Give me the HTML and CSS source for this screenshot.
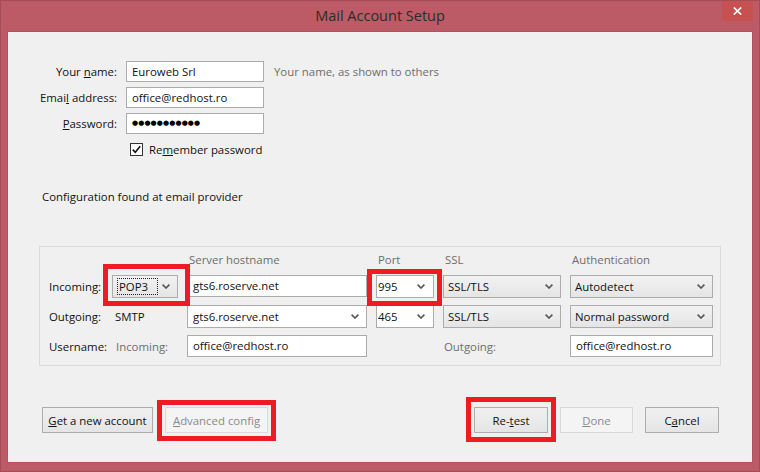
FILE: index.html
```html
<!DOCTYPE html>
<html lang="en">
<head>
<meta charset="utf-8">
<title>Mail Account Setup</title>
<link rel="stylesheet" href="styles.css">
</head>
<body>
<div class="window">
  <header class="titlebar">
    <span class="spacer"></span>
    <h1 class="title">Mail Account Setup</h1>
    <button class="close" aria-label="Close">
      <svg width="9" height="8" viewBox="0 0 9 8"><path d="M0.8 0.5 L8.2 7.5 M8.2 0.5 L0.8 7.5" stroke="#fff" stroke-width="1.7" fill="none"/></svg>
    </button>
  </header>

  <main class="client">
    <div class="identity">
      <span class="lbl">Your <u>n</u>ame:</span>
      <div class="field">Euroweb Srl</div>
      <span class="hint">Your name, as shown to others</span>

      <span class="lbl">Emai<u>l</u> address:</span>
      <div class="field">office@redhost.ro</div>
      <span></span>

      <span class="lbl"><u>P</u>assword:</span>
      <div class="field pw">●●●●●●●●●●●</div>
      <span></span>

      <div class="remember">
        <span class="checkbox">
          <svg width="11" height="11" viewBox="0 0 11 11"><path d="M1.8 5.6 L4.3 8.2 L9.2 2.2" stroke="#111" stroke-width="1.6" fill="none"/></svg>
        </span>
        <span>Re<u>m</u>ember password</span>
      </div>
    </div>

    <p class="status">Configuration found at email provider</p>

    <section class="server">
      <span></span>
      <span></span>
      <span class="colhead">Server hostname</span>
      <span class="colhead">Port</span>
      <span class="colhead">SSL</span>
      <span class="colhead">Authentication</span>

      <span class="rowlbl">Incoming:</span>
      <div class="mark mark-pop">
        <div class="select gray pop">
          <span class="focus">POP3</span>
          <svg class="chev" width="8" height="5" viewBox="0 0 8 5"><path d="M0.6 0.6 L4 4 L7.4 0.6" stroke="#555" stroke-width="1.6" fill="none"/></svg>
        </div>
      </div>
      <div class="field host">gts6.roserve.net</div>
      <div class="mark mark-port">
        <div class="select white port">
          <span>995</span>
          <svg class="chev" width="8" height="5" viewBox="0 0 8 5"><path d="M0.6 0.6 L4 4 L7.4 0.6" stroke="#555" stroke-width="1.6" fill="none"/></svg>
        </div>
      </div>
      <div class="select gray">
        <span>SSL/TLS</span>
        <svg class="chev" width="8" height="5" viewBox="0 0 8 5"><path d="M0.6 0.6 L4 4 L7.4 0.6" stroke="#555" stroke-width="1.6" fill="none"/></svg>
      </div>
      <div class="select gray">
        <span>Autodetect</span>
        <svg class="chev" width="8" height="5" viewBox="0 0 8 5"><path d="M0.6 0.6 L4 4 L7.4 0.6" stroke="#555" stroke-width="1.6" fill="none"/></svg>
      </div>

      <span class="rowlbl">Outgoing:</span>
      <span class="proto">SMTP</span>
      <div class="select white host">
        <span>gts6.roserve.net</span>
        <svg class="chev" width="8" height="5" viewBox="0 0 8 5"><path d="M0.6 0.6 L4 4 L7.4 0.6" stroke="#555" stroke-width="1.6" fill="none"/></svg>
      </div>
      <div class="select white port">
        <span>465</span>
        <svg class="chev" width="8" height="5" viewBox="0 0 8 5"><path d="M0.6 0.6 L4 4 L7.4 0.6" stroke="#555" stroke-width="1.6" fill="none"/></svg>
      </div>
      <div class="select gray">
        <span>SSL/TLS</span>
        <svg class="chev" width="8" height="5" viewBox="0 0 8 5"><path d="M0.6 0.6 L4 4 L7.4 0.6" stroke="#555" stroke-width="1.6" fill="none"/></svg>
      </div>
      <div class="select gray">
        <span>Normal password</span>
        <svg class="chev" width="8" height="5" viewBox="0 0 8 5"><path d="M0.6 0.6 L4 4 L7.4 0.6" stroke="#555" stroke-width="1.6" fill="none"/></svg>
      </div>

      <span class="rowlbl">Username:</span>
      <span class="sublbl sub-in">Incoming:</span>
      <div class="field host">office@redhost.ro</div>
      <span></span>
      <span class="sublbl sub-out">Outgoing:</span>
      <div class="field">office@redhost.ro</div>
    </section>

    <footer class="actions">
      <div class="group">
        <button class="btn btn-new"><u>G</u>et a new account</button>
        <span class="mark mark-adv"><button class="btn btn-adv" disabled><u>A</u>dvanced config</button></span>
      </div>
      <div class="group">
        <span class="mark mark-retest"><button class="btn btn-std">Re-<u>t</u>est</button></span>
        <button class="btn btn-std btn-done" disabled><u>D</u>one</button>
        <button class="btn btn-std">C<u>a</u>ncel</button>
      </div>
    </footer>
  </main>
</div>
</body>
</html>
```

FILE: styles.css
```css
* { box-sizing: border-box; }

html, body {
  margin: 0;
  padding: 0;
}

body {
  width: 760px;
  height: 472px;
  overflow: hidden;
  font-family: "Open Sans", "Noto Sans", sans-serif;
  font-size: 11.4px;
  color: #111;
}

u { text-underline-offset: 1px; }

.window {
  width: 760px;
  height: 472px;
  background: #bc5b65;
  border: 1px solid #a74b56;
  display: flex;
  flex-direction: column;
}

/* ---------- title bar ---------- */
.titlebar {
  height: 30px;
  flex: none;
  display: grid;
  grid-template-columns: 1fr auto 1fr;
  align-items: center;
}

.title {
  margin: 0;
  font-size: 14.5px;
  font-weight: normal;
  color: #2b2b2b;
  line-height: 20px;
}

.close {
  justify-self: end;
  align-self: start;
  width: 31px;
  height: 20px;
  margin-right: 6px;
  padding: 0;
  border: 0;
  background: #c75050;
  display: flex;
  align-items: center;
  justify-content: center;
}

/* ---------- client area ---------- */
.client {
  margin: 0 6px;
  height: 432px;
  flex: none;
  background: #f0f0f0;
  border: 1px solid #b3525d;
}

.identity {
  margin: 29px 0 0 32px;
  display: grid;
  grid-template-columns: 77px 138px auto;
  grid-auto-rows: 21px;
  column-gap: 9px;
  row-gap: 5px;
  align-items: center;
}

.lbl {
  text-align: right;
  white-space: nowrap;
}

.field {
  height: 21px;
  background: #fff;
  border: 1px solid #ababab;
  padding: 0 5px;
  line-height: 19px;
  white-space: nowrap;
  overflow: hidden;
}

.pw {
  font-family: "DejaVu Sans", sans-serif;
  font-size: 7px;
  letter-spacing: 0.1px;
  color: #000;
}

.hint {
  color: #6d6d6d;
  margin-left: 1px;
  white-space: nowrap;
}

.remember {
  grid-column: 2 / span 2;
  display: flex;
  align-items: center;
  gap: 6px;
  padding-left: 4px;
}

.checkbox {
  width: 13px;
  height: 13px;
  border: 1px solid #333;
  background: #fff;
  display: flex;
  align-items: center;
  justify-content: center;
}

.status {
  margin: 29px 0 0 34px;
  line-height: 16px;
}

/* ---------- server box ---------- */
.server {
  margin: 41px 0 0 31px;
  width: 682px;
  height: 120px;
  border: 1px solid #dadada;
  padding: 5px 7px 7px 8px;
  display: grid;
  grid-template-columns: 55px 66px 180px 58px 118px 143px;
  grid-template-rows: 16px 24px 24px 24px;
  column-gap: 9px;
  row-gap: 6px;
  align-items: center;
}

.colhead {
  color: #6d6d6d;
  padding-left: 2px;
  line-height: 16px;
  white-space: nowrap;
}

.rowlbl { padding-left: 1px; white-space: nowrap; }

.proto { padding-left: 3px; }

.sublbl { color: #6d6d6d; white-space: nowrap; }
.sub-in { padding-left: 4px; }
.sub-out { padding-left: 1px; }

.server .field { height: 22px; line-height: 20px; }

.select {
  height: 23px;
  border: 1px solid #acacac;
  display: flex;
  align-items: center;
  justify-content: space-between;
  padding: 0 7px 0 4px;
  white-space: nowrap;
}

.select.gray { background: linear-gradient(#f2f2f2, #e5e5e5); }
.select.white { background: #fff; padding-left: 5px; }
.select.port { padding-left: 1px; padding-right: 8px; }

.focus {
  border: 1px dotted #222;
  width: 41px;
  height: 17px;
  line-height: 15px;
  padding-left: 1px;
}

.chev { flex: none; }

/* ---------- annotation frames ---------- */
.mark {
  position: relative;
  display: block;
}

.mark::after {
  content: "";
  position: absolute;
  border: 5px solid #ed1c24;
  pointer-events: none;
}

.mark-pop::after { inset: -11px -12px -8px -9px; }
.mark-port::after { inset: -6px -8px -8px -9px; }
.mark-adv::after { inset: -7px -8px -8px -8px; }
.mark-retest::after { inset: -10px -8px -9px -8px; }

/* ---------- buttons ---------- */
.actions {
  margin-top: 41px;
  padding: 0 33px 0 34px;
  display: flex;
  justify-content: space-between;
}

.group {
  display: flex;
  gap: 12px;
}

.btn {
  height: 26px;
  padding: 0;
  font-family: inherit;
  font-size: 11.4px;
  color: #111;
  border: 1px solid #adadad;
  background: linear-gradient(#f0f0f0, #e5e5e5);
  display: block;
}

.btn:disabled {
  color: #8a8a8a;
  border-color: #d9d9d9;
  background: #f4f4f4;
}

.btn-new { width: 111px; }
.btn-adv { width: 103px; }
.btn-std { width: 74px; }
.btn-done { width: 73px; }
```
